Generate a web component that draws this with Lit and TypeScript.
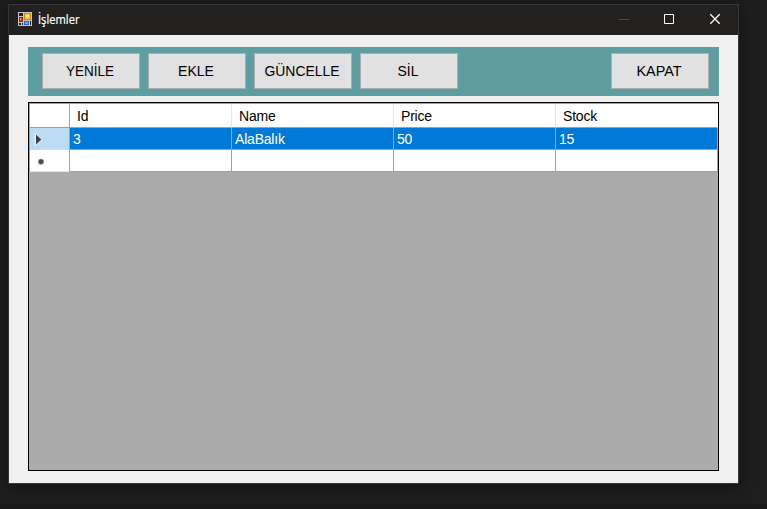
import { LitElement, html, css, svg } from "lit";
import { customElement, property } from "lit/decorators.js";

@customElement("tool-button")
class ToolButton extends LitElement {
  @property() label = "";
  @property({ type: Number }) textWidth = 50;
  static styles = css`
    :host { display: block; }
    .btn {
      box-sizing: border-box; display: block; width: 98px; height: 36px; padding: 0;
      border: 1px solid #adadad; border-radius: 0; background: #e1e1e1;
    }
    svg { display: block; width: 96px; height: 34px; }
    text { font: 14px "Liberation Sans", Arial, sans-serif; fill: #000; text-anchor: middle; }
  `;
  render() {
    return html`<button class="btn"><svg viewBox="0 0 96 34">
      ${svg`<text x="47" y="22" textLength=${this.textWidth} lengthAdjust="spacingAndGlyphs">${this.label}</text>`}
    </svg></button>`;
  }
}

@customElement("data-grid")
class DataGrid extends LitElement {
  columns = ["Id", "Name", "Price", "Stock"];
  record = ["3", "AlaBalık", "50", "15"];
  static styles = css`
    :host {
      display: block; box-sizing: border-box; height: 369px; border: 1px solid #000;
      background: #ababab; font: 14px "Liberation Sans", Arial, sans-serif; letter-spacing: -0.2px; color: #000;
    }
    .frame { border-top: 1px solid #a0a0a0; border-left: 1px solid #a0a0a0; }
    .row { display: grid; grid-template-columns: 40px repeat(4, 162px); }
    .cell {
      box-sizing: border-box; height: 22px; line-height: 23px; padding-left: 3px;
      background: #fff; border-right: 1px solid #a0a0a0; border-bottom: 1px solid #a0a0a0;
      white-space: nowrap;
    }
    .head .cell { height: 24px; line-height: 25px; padding-left: 7px; border-right-color: #e5e5e5; }
    .head .cell:first-child { border-right-color: #a0a0a0; }
    .head .cell:last-child { border-right-color: #fff; }
    .selected .cell { background: #0078d7; color: #fff; }
    .cell.marker { padding: 0; border-bottom-color: #e5e5e5; }
    .selected .cell.marker { background: #bcdcf4; border-bottom-color: #bcdcf4; }
    .marker svg { display: block; width: 20px; height: 21px; }
  `;
  render() {
    return html`<div class="frame">
      <div class="row head"><div class="cell"></div>${this.columns.map((c) => html`<div class="cell">${c}</div>`)}</div>
      <div class="row selected">
        <div class="cell marker"><svg viewBox="0 0 20 21">
          <path d="M4.5 4.5L12.5 11.5L4.5 18.5Z" fill="#fff" opacity=".55" />
          <path d="M6 6.5L11.4 11.5L6 16.5Z" fill="#404040" />
        </svg></div>
        ${this.record.map((c) => html`<div class="cell">${c}</div>`)}
      </div>
      <div class="row">
        <div class="cell marker"><svg viewBox="0 0 20 21">
          <circle cx="11" cy="11.8" r="3" fill="#909090" />
          <circle cx="11" cy="11.8" r="2.2" fill="#484848" />
        </svg></div>
        ${this.record.map(() => html`<div class="cell"></div>`)}
      </div>
    </div>`;
  }
}

@customElement("app-root")
class AppRoot extends LitElement {
  static styles = css`
    :host {
      display: block; box-sizing: border-box; width: 767px; height: 509px; padding: 4px 28px 0 8px;
      overflow: hidden; background: linear-gradient(#1e1e1e 504px, #191718 504px);
    }
    .window {
      box-sizing: border-box; width: 731px; height: 480px; border: 1px solid #363736;
      background: #f0f0f0; box-shadow: 0 3px 14px 1px rgba(0, 0, 0, 0.38);
    }
    .title { display: flex; align-items: center; height: 30px; background: #23211f; color: #fff; }
    .logo { width: 14px; height: 14px; margin: 0 6px 2px 9px; }
    .name { flex: 1; height: 30px; }
    .name text { font: 12px "Open Sans", "Noto Sans", sans-serif; fill: #fff; stroke: #fff; stroke-width: 0.2px; }
    .controls { width: 138px; height: 30px; }
    .content { padding: 12px 19px; }
    .toolbar {
      box-sizing: border-box; display: flex; gap: 8px; height: 49px; padding: 6px 10px 0 14px;
      margin-bottom: 6px; background: #5f9ea0;
    }
    .last { margin-left: auto; }
  `;
  render() {
    return html`<div class="window">
      <div class="title">
        <svg class="logo" viewBox="0 0 14 14" shape-rendering="crispEdges">
          <path d="M0 0H14V14H0Z" fill="#c6c6c6" />
          <path d="M1 1H5V4H1ZM1 11H3V13H1ZM4 11H5V13H4ZM12 9H13V13H12Z" fill="#23211f" />
          <path d="M1 5H5V10H1Z" fill="#a51212" /><path d="M2 6H4V9H2Z" fill="#d83a2c" /><path d="M2 6H3V8H2Z" fill="#f5a08c" />
          <path d="M6 1H13V8H6Z" fill="#c68a08" /><path d="M7 2H12V7H7Z" fill="#f8c83a" /><path d="M8 3H11V5H8Z" fill="#ffe68a" />
          <path d="M6 9H11V13H6Z" fill="#2f62c8" /><path d="M7 10H10V12H7Z" fill="#79a8f2" />
        </svg>
        <svg class="name"><text x="0" y="19" textLength="41.5" lengthAdjust="spacingAndGlyphs">İşlemler</text></svg>
        <svg class="controls" viewBox="0 0 138 30" fill="none">
          <path d="M19 14.5H29" stroke="#4d4b49" />
          <path d="M64.5 9.5H73.5V18.5H64.5Z" stroke="#fff" />
          <path d="M110.3 9.3L119.7 18.7M119.7 9.3L110.3 18.7" stroke="#fff" stroke-width="1.3" />
        </svg>
      </div>
      <div class="content">
        <div class="toolbar">
          <tool-button label="YENİLE" .textWidth=${48}></tool-button>
          <tool-button label="EKLE" .textWidth=${36}></tool-button>
          <tool-button label="GÜNCELLE" .textWidth=${75}></tool-button>
          <tool-button label="SİL" .textWidth=${21}></tool-button>
          <tool-button class="last" label="KAPAT" .textWidth=${45}></tool-button>
        </div>
        <data-grid></data-grid>
      </div>
    </div>`;
  }
}
